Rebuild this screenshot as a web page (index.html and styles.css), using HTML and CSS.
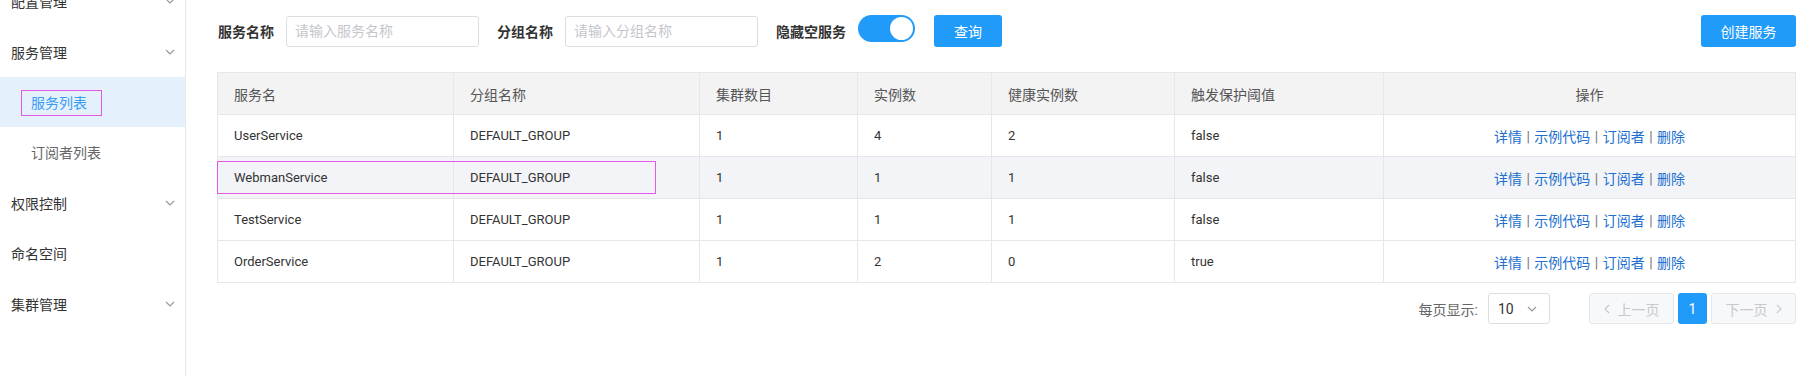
FILE: index.html
```html
<!DOCTYPE html>
<html lang="zh-CN">
<head>
    <meta charset="UTF-8">
    <title>服务列表</title>
    <link rel="stylesheet" href="styles.css">
</head>
<body>
<div class="layout">
    <aside class="sidebar">
        <ul class="menu">
            <li class="menu-item"><span>配置管理</span><svg class="chev" viewBox="0 0 10 6"><path d="M1 1l4 4 4-4"/></svg></li>
            <li class="menu-item"><span>服务管理</span><svg class="chev" viewBox="0 0 10 6"><path d="M1 1l4 4 4-4"/></svg></li>
            <li class="menu-sub active"><span>服务列表</span></li>
            <li class="menu-sub"><span>订阅者列表</span></li>
            <li class="menu-item"><span>权限控制</span><svg class="chev" viewBox="0 0 10 6"><path d="M1 1l4 4 4-4"/></svg></li>
            <li class="menu-item"><span>命名空间</span></li>
            <li class="menu-item"><span>集群管理</span><svg class="chev" viewBox="0 0 10 6"><path d="M1 1l4 4 4-4"/></svg></li>
        </ul>
        <div class="mark mark-nav"></div>
    </aside>

    <main class="content">
        <div class="toolbar">
            <label class="field-label">服务名称</label>
            <input class="field-input" type="text" placeholder="请输入服务名称">
            <label class="field-label">分组名称</label>
            <input class="field-input" type="text" placeholder="请输入分组名称">
            <label class="field-label">隐藏空服务</label>
            <span class="switch"><span class="knob"></span></span>
            <button class="btn btn-query">查询</button>
            <button class="btn btn-create">创建服务</button>
        </div>

        <div class="table-wrap">
            <table class="grid">
                <colgroup>
                    <col class="w-name"><col class="w-group"><col class="w-cluster"><col class="w-inst">
                    <col class="w-healthy"><col class="w-threshold"><col class="w-ops">
                </colgroup>
                <thead>
                    <tr>
                        <th>服务名</th><th>分组名称</th><th>集群数目</th><th>实例数</th>
                        <th>健康实例数</th><th>触发保护阈值</th><th class="center">操作</th>
                    </tr>
                </thead>
                <tbody>
                    <tr>
                        <td>UserService</td><td>DEFAULT_GROUP</td><td>1</td><td>4</td><td>2</td><td>false</td>
                        <td class="center ops"><a>详情</a> <span class="sep">|</span> <a>示例代码</a> <span class="sep">|</span> <a>订阅者</a> <span class="sep">|</span> <a>删除</a></td>
                    </tr>
                    <tr class="hover">
                        <td>WebmanService</td><td>DEFAULT_GROUP</td><td>1</td><td>1</td><td>1</td><td>false</td>
                        <td class="center ops"><a>详情</a> <span class="sep">|</span> <a>示例代码</a> <span class="sep">|</span> <a>订阅者</a> <span class="sep">|</span> <a>删除</a></td>
                    </tr>
                    <tr>
                        <td>TestService</td><td>DEFAULT_GROUP</td><td>1</td><td>1</td><td>1</td><td>false</td>
                        <td class="center ops"><a>详情</a> <span class="sep">|</span> <a>示例代码</a> <span class="sep">|</span> <a>订阅者</a> <span class="sep">|</span> <a>删除</a></td>
                    </tr>
                    <tr>
                        <td>OrderService</td><td>DEFAULT_GROUP</td><td>1</td><td>2</td><td>0</td><td>true</td>
                        <td class="center ops"><a>详情</a> <span class="sep">|</span> <a>示例代码</a> <span class="sep">|</span> <a>订阅者</a> <span class="sep">|</span> <a>删除</a></td>
                    </tr>
                </tbody>
            </table>
            <div class="mark mark-row"></div>
        </div>

        <div class="pager">
            <span class="pager-label">每页显示:</span>
            <span class="page-size">10<svg class="chev" viewBox="0 0 10 6"><path d="M1 1l4 4 4-4"/></svg></span>
            <div class="pages">
                <span class="page-btn disabled"><svg class="arrow" viewBox="0 0 6 10"><path d="M5 1L1 5l4 4"/></svg>上一页</span>
                <span class="page-num current">1</span>
                <span class="page-btn disabled">下一页<svg class="arrow" viewBox="0 0 6 10"><path d="M1 1l4 4-4 4"/></svg></span>
            </div>
        </div>
    </main>
</div>
</body>
</html>
```

FILE: styles.css
```css
body {
    margin: 0;
    font-family: Roboto, "Noto Sans CJK SC", sans-serif;
    font-size: 14px;
    color: #333;
    background: #fff;
    overflow: hidden;
}

.layout {
    display: flex;
    height: 100vh;
}

/* sidebar */
.sidebar {
    position: relative;
    width: 185px;
    flex-shrink: 0;
    border-right: 1px solid #e6e7eb;
}

.menu {
    list-style: none;
    margin: -24px 0 0;
    padding: 0;
}

.menu li {
    height: 50.5px;
    display: flex;
    align-items: center;
    justify-content: space-between;
    padding: 0 10px 0 11px;
    color: #333;
}

.menu .menu-sub {
    padding-left: 31px;
    color: #666;
}

.menu .active {
    height: 50px;
    background: #e4f1fc;
    color: #3a9cf3;
}

.chev {
    width: 10px;
    height: 6px;
    fill: none;
    stroke: #999;
    stroke-width: 1.2;
}

.mark {
    position: absolute;
    border: 1px solid #e45ae8;
    box-sizing: border-box;
}

.mark-nav {
    left: 21px;
    top: 90px;
    width: 81px;
    height: 26px;
}

/* content */
.content {
    flex: 1;
    padding: 15px 4px 0 31px;
}

.toolbar {
    display: flex;
    align-items: center;
    height: 32px;
}

.field-label {
    font-weight: bold;
    color: #333;
    margin: 0 12px 0 1px;
}

.field-input {
    width: 193px;
    height: 31px;
    box-sizing: border-box;
    border: 1px solid #dcdee3;
    border-radius: 3px;
    padding: 0 8px;
    font-family: inherit;
    font-size: 14px;
    margin-right: 17px;
    outline: none;
}

.field-input::placeholder {
    color: #c4c6cc;
}

.switch {
    align-self: flex-start;
    position: relative;
    width: 57px;
    height: 27px;
    border-radius: 14px;
    background: #209bfa;
    margin-right: 19px;
}

.knob {
    position: absolute;
    right: 2px;
    top: 2px;
    width: 23px;
    height: 23px;
    border-radius: 50%;
    background: #fff;
}

.btn {
    height: 32px;
    border: none;
    border-radius: 3px;
    background: #209bfa;
    color: #fff;
    font-family: inherit;
    font-size: 14px;
    padding: 0 20px;
}

.btn-create {
    margin-left: auto;
    width: 95px;
    padding: 0;
}

/* table */
.table-wrap {
    position: relative;
    margin-top: 25px;
}

.grid {
    width: 100%;
    table-layout: fixed;
    border-collapse: collapse;
    border: 1px solid #e6e7eb;
}

.w-name { width: 236px; }
.w-group { width: 246px; }
.w-cluster { width: 158px; }
.w-inst { width: 134px; }
.w-healthy { width: 183px; }
.w-threshold { width: 209px; }

.grid th,
.grid td {
    height: 41px;
    padding: 0 16px;
    border: 1px solid #e6e7eb;
    text-align: left;
    white-space: nowrap;
}

.grid th {
    background: #f3f3f4;
    font-weight: normal;
    color: #555;
}

.grid td {
    font-size: 13px;
    color: #333;
}

.grid .center {
    text-align: center;
}

.grid .ops {
    font-size: 14px;
    color: #777;
}

.ops a {
    color: #2170d0;
}

.ops .sep {
    margin: 0 1px;
}

.grid tr.hover td {
    background: #f2f4f7;
}

.mark-row {
    left: 0;
    top: 89px;
    width: 439px;
    height: 33px;
}

/* pagination */
.pager {
    display: flex;
    justify-content: flex-end;
    align-items: center;
    margin-top: 10px;
}

.pager-label {
    color: #666;
    margin-right: 10px;
}

.page-size {
    width: 62px;
    height: 31px;
    box-sizing: border-box;
    border: 1px solid #dcdee3;
    border-radius: 3px;
    display: flex;
    align-items: center;
    justify-content: space-between;
    padding: 0 12px 0 9px;
    color: #333;
}

.pages {
    display: flex;
    gap: 4px;
    margin-left: 39px;
}

.page-btn,
.page-num {
    height: 31px;
    box-sizing: border-box;
    border-radius: 3px;
    display: flex;
    align-items: center;
    justify-content: center;
}

.page-btn {
    width: 85px;
    gap: 8px;
    border: 1px solid #e6e7eb;
    background: #f7f8fa;
    color: #c8c9cc;
}

.page-num {
    width: 29px;
}

.page-num.current {
    background: #209bfa;
    color: #fff;
}

.arrow {
    width: 6px;
    height: 10px;
    fill: none;
    stroke: #c8c9cc;
    stroke-width: 1.2;
}
```
